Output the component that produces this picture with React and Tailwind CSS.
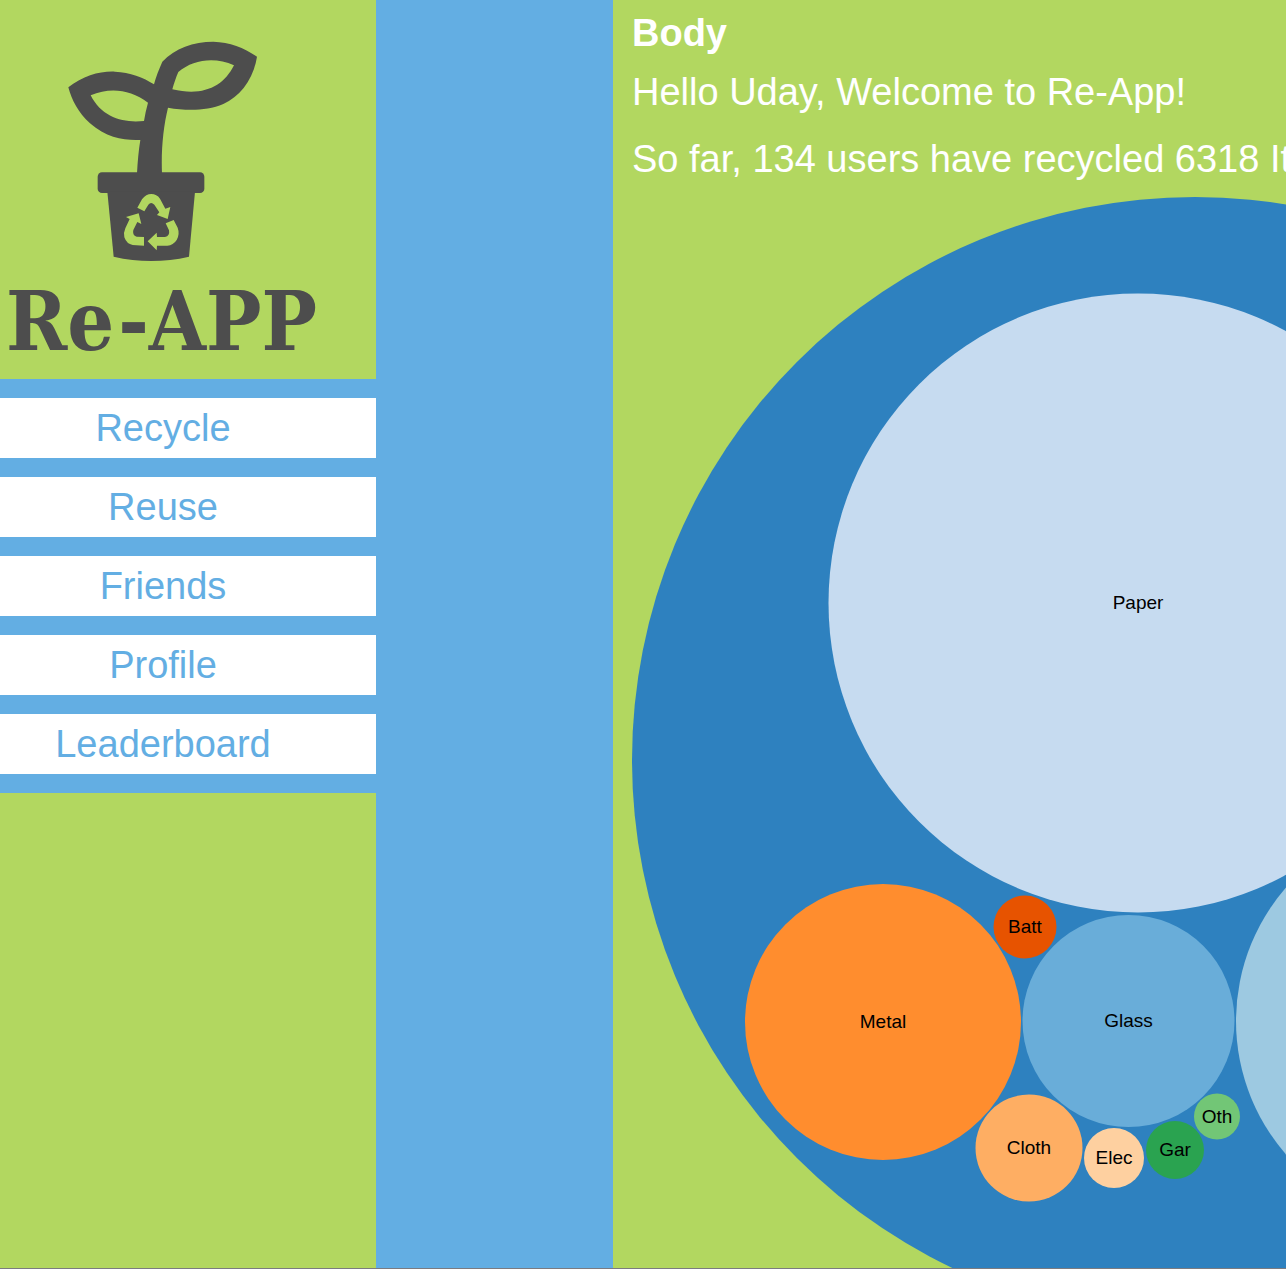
const links = ['Recycle', 'Reuse', 'Friends', 'Profile', 'Leaderboard'];

const bubbles = [
  { id: 'paper', label: 'Paper', x: 506, y: 406, r: 309.5, fill: 'fill-[#c6dbf0]' },
  { id: 'plastic', label: '', x: 807, y: 824, r: 203, fill: 'fill-[#9dc9e1]' },
  { id: 'glass', label: 'Glass', x: 496.5, y: 824, r: 106, fill: 'fill-[#69add9]' },
  { id: 'metal', label: 'Metal', x: 251, y: 825, r: 138, fill: 'fill-[#ff8d2e]' },
  { id: 'battery', label: 'Batt', x: 393, y: 730, r: 31.5, fill: 'fill-[#e75300]' },
  { id: 'cloth', label: 'Cloth', x: 397, y: 951, r: 53.5, fill: 'fill-[#feae63]' },
  { id: 'electronics', label: 'Elec', x: 482, y: 961, r: 30, fill: 'fill-[#fed0a0]' },
  { id: 'garden', label: 'Gar', x: 543, y: 953, r: 29, fill: 'fill-[#2aa350]' },
  { id: 'other', label: 'Oth', x: 585, y: 919.5, r: 23, fill: 'fill-[#72c676]' },
];

function PlantLogo() {
  return (
    <svg
      viewBox="0 0 660 702"
      className="ml-[50px] h-[234px] w-[220px] fill-[#4d4d4d]"
      aria-hidden="true"
    >
      <path
        fillRule="evenodd"
        d="M55 172C100 137 150 123 195 125C240 127 280 142 312 163C318 140 327 118 337 95C375 55 430 35 490 35C540 36 585 55 621 80C610 150 570 200 520 222C470 243 410 243 354 233C340 290 333 360 336 430L261 430C263 395 266 360 271 330C225 332 170 325 120 280C85 248 65 210 55 172ZM122 196C180 172 240 178 294 218C289 236 285 254 282 273C220 280 155 262 122 196ZM385 126C430 88 495 80 552 106C520 170 460 200 367 178C372 160 378 142 385 126Z"
      />
      <rect x="143" y="427" width="320" height="62" rx="13" />
      <path d="M172 485L191 680Q304 706 417 680L435 485Z" />
      <g transform="translate(90 390)" className="fill-[#b2d760]">
        <path d="M172 143L186 118Q198 102 214 102Q230 102 240 116L256 146L271 141L263 177L231 165L238 157L223 134Q213 124 205 134L193 154Z" />
        <path d="M257 190L281 180L293 203Q300 222 290 240Q280 256 262 257L231 257L230 271L203 244L230 218L231 231L255 231Q270 228 267 211Z" />
        <path d="M192 231L192 257L158 255Q140 252 133 232Q130 218 136 205L149 177L138 171L176 160L184 192L172 186L160 210Q156 226 170 230Z" />
      </g>
    </svg>
  );
}

function BubbleChart() {
  return (
    <svg
      viewBox="0 0 1126 1126"
      className="mt-4 h-[1126px] w-[1126px] max-w-none shrink-0"
      role="img"
      aria-label="Recycled items by material"
    >
      <circle cx="563" cy="563" r="563" className="fill-[#2e81bf]" />
      {bubbles.map((b) => (
        <g key={b.id}>
          <circle cx={b.x} cy={b.y} r={b.r} className={b.fill} />
          {b.label && (
            <text x={b.x} y={b.y + 6} textAnchor="middle" className="fill-black text-[19px]">
              {b.label}
            </text>
          )}
        </g>
      ))}
    </svg>
  );
}

export default function App() {
  return (
    <div className="flex h-screen overflow-hidden border-b border-[#7b7b80] bg-[#b2d760] font-['Liberation_Sans',Arial,sans-serif] text-[38px] leading-[44px]">
      <aside className="w-[613px] shrink-0 bg-[#63aee3]">
        <div className="flex h-full w-[376px] flex-col bg-[#b2d760]">
          <header className="h-[379px] shrink-0 pt-[30px]">
            <PlantLogo />
            <h1 className="flex gap-1 pl-[6px] font-['DejaVu_Serif_Condensed','DejaVu_Serif',serif] text-[82px] leading-[114px] font-bold whitespace-nowrap text-[#4d4d4d]">
              <span>Re</span>
              <span>-APP</span>
            </h1>
          </header>
          <nav className="flex flex-col gap-[19px] bg-[#63aee3] py-[19px]">
            {links.map((link) => (
              <a key={link} href="#" className="bg-white py-2 pr-[50px] text-center text-[#63aee3]">
                {link}
              </a>
            ))}
          </nav>
        </div>
      </aside>
      <main className="min-w-0 flex-1 overflow-hidden pt-[11px] pl-[19px] whitespace-nowrap text-white">
        <h2 className="font-bold">Body</h2>
        <p className="mt-[15px]">Hello Uday, Welcome to Re-App!</p>
        <p className="mt-[23px]">So far, 134 users have recycled 6318 Items</p>
        <BubbleChart />
      </main>
    </div>
  );
}
